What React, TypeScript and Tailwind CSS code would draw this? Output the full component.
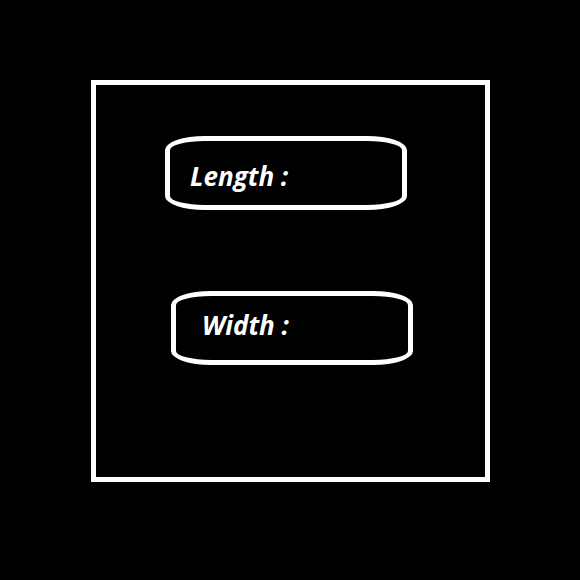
type FieldProps = {
  id: string;
  label: string;
  className: string;
};

function Field({ id, label, className }: FieldProps) {
  return (
    <div
      className={`flex h-[74px] items-start rounded-[40px/14px] border-5 border-white pr-5 ${className}`}
    >
      <label htmlFor={id} className="shrink-0 whitespace-pre">
        {label}
      </label>
      <input
        id={id}
        type="text"
        className="ml-2 h-8 w-0 min-w-0 flex-1 bg-transparent text-white outline-none"
      />
    </div>
  );
}

export default function App() {
  return (
    <main className="min-h-screen bg-black pt-20 pr-[90px] pb-[98px] pl-[91px] font-['Open_Sans',sans-serif] text-[26px] leading-8 font-bold text-white italic">
      <form className="flex flex-col gap-[81px] border-5 border-white pt-[51px] pb-[112px]">
        <Field id="length" label="Length :" className="mr-[78px] ml-[69px] pt-[19px] pl-5" />
        <Field id="width" label="Width :" className="mr-[72px] ml-[75px] pt-[13px] pl-[26px]" />
      </form>
    </main>
  );
}
